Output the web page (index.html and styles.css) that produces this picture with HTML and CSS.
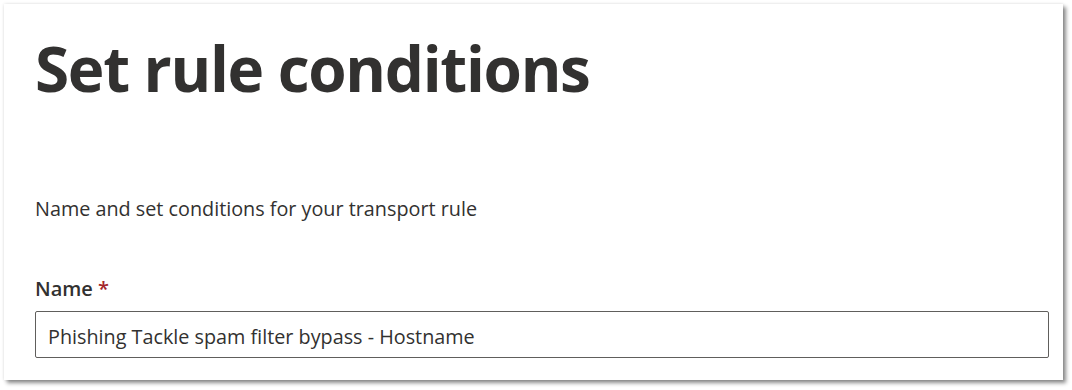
FILE: index.html
```html
<!DOCTYPE html>
<html lang="en">
<head>
<meta charset="utf-8">
<title>Set rule conditions</title>
<link rel="stylesheet" href="styles.css">
</head>
<body>
<main class="card">
  <h1 class="title">Set rule conditions</h1>
  <p class="subtitle">Name and set conditions for your transport rule</p>
  <div class="field">
    <label class="label" for="rule-name">Name <span class="req">*</span></label>
    <div class="input"><span class="value">Phishing Tackle spam filter bypass - Hostname</span></div>
  </div>
</main>
</body>
</html>
```

FILE: styles.css
```css
html, body {
  margin: 0;
  padding: 0;
  background: #ffffff;
}
body {
  font-family: "Open Sans", "Noto Sans", sans-serif;
  color: #323130;
  padding: 4px 9px 10px 4px;
}
.card {
  display: flex;
  flex-direction: column;
  background: #ffffff;
  height: 376px;
  box-sizing: border-box;
  padding: 26px 14px 0 31px;
  box-shadow: 3px 3px 4px rgba(0, 0, 0, 0.45), 0 0 3px rgba(0, 0, 0, 0.12);
}
.title {
  margin: 0;
  font-size: 62px;
  line-height: 76px;
  font-weight: 700;
  letter-spacing: -1.3px;
}
.subtitle {
  margin: 89px 0 0 0;
  font-size: 19.8px;
  line-height: 28px;
}
.field {
  display: flex;
  flex-direction: column;
  margin-top: 52px;
}
.label {
  font-size: 20px;
  line-height: 28px;
  font-weight: 600;
  margin-bottom: 8px;
}
.req {
  color: #a4262c;
}
.input {
  height: 47px;
  box-sizing: border-box;
  border: 1px solid #605e5c;
  border-radius: 2px;
  display: flex;
  align-items: center;
  padding: 5px 12px 0;
}
.value {
  font-size: 19.8px;
  line-height: 28px;
}
```
